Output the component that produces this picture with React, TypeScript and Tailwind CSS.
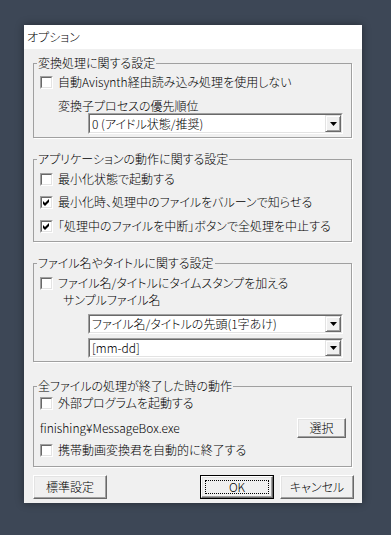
import React from 'react';

const font = "font-['Noto_Sans_CJK_JP','Liberation_Sans',sans-serif] font-light [font-feature-settings:'palt']";

function Check({ checked, label }: { checked?: boolean; label: string }) {
  return (
    <div className="flex items-center h-[16px] pl-[6px] gap-[5px]">
      <span className="w-[13px] h-[13px] shrink-0 border border-t-[#a0a0a0] border-l-[#a0a0a0] border-r-white border-b-white">
        <span className="block w-full h-full bg-white border border-t-[#696969] border-l-[#696969] border-r-[#e3e3e3] border-b-[#e3e3e3]">
          {checked && (
            <svg width="9" height="9" viewBox="0 0 9 9" className="block">
              <path d="M1 3 L3 5 L7 1 L7 4 L3 8 L1 6 Z" fill="#000" />
            </svg>
          )}
        </span>
      </span>
      <span className="text-[12px] leading-[16px] text-black whitespace-nowrap">{label}</span>
    </div>
  );
}

function Combo({ value, h }: { value: string; h: string }) {
  return (
    <div className={`flex ml-[54px] mr-[8px] ${h} bg-white border border-t-[#a0a0a0] border-l-[#a0a0a0] border-r-white border-b-white`}>
      <div className="flex flex-1 items-stretch border border-t-[#696969] border-l-[#696969] border-r-[#e3e3e3] border-b-[#e3e3e3]">
        <span className="flex-1 flex items-center pl-[2px] text-[12px] leading-[14px] text-black whitespace-nowrap">{value}</span>
        <span className="w-[16px] flex items-center justify-center bg-[#f0f0f0] border border-t-[#e3e3e3] border-l-[#e3e3e3] border-r-[#696969] border-b-[#696969] shadow-[inset_1px_1px_0_#fff,inset_-1px_-1px_0_#a0a0a0]">
          <svg width="7" height="4" viewBox="0 0 7 4" className="block">
            <path d="M0 0 H7 L3.5 4 Z" fill="#000" />
          </svg>
        </span>
      </div>
    </div>
  );
}

function Btn({ children, def, className }: { children: React.ReactNode; def?: boolean; className?: string }) {
  const inner = (
    <div className="w-full h-full flex items-center justify-center bg-[#f0f0f0] border border-t-white border-l-white border-r-[#696969] border-b-[#696969] shadow-[inset_-1px_-1px_0_#a0a0a0,inset_1px_1px_0_#e3e3e3]">
      {def ? (
        <span className="w-[calc(100%-6px)] h-[calc(100%-6px)] flex items-center justify-center border border-dotted border-black text-[12px] leading-[14px] text-black">
          {children}
        </span>
      ) : (
        <span className="text-[12px] leading-[14px] text-black">{children}</span>
      )}
    </div>
  );
  return def ? (
    <div className={`border border-black ${className}`}>{inner}</div>
  ) : (
    <div className={className}>{inner}</div>
  );
}

function Group({ title, className, children }: { title: string; className?: string; children: React.ReactNode }) {
  return (
    <fieldset className={`mr-[2px] border border-[#a0a0a0] shadow-[1px_1px_0_#fff] ${className}`}>
      <legend className="ml-[3px] px-[1px] text-[12px] leading-[14px] text-black">{title}</legend>
      {children}
    </fieldset>
  );
}

export default function App() {
  return (
    <div className={`w-[391px] h-[535px] bg-[#3d4756] pt-[25px] pl-[24px] ${font}`}>
      <div className="w-[338px] h-[478px] flex flex-col shadow-[0_0_8px_rgba(0,0,0,0.4)]">
        <div className="h-[24px] bg-white flex items-center pl-[3px] text-[12px] leading-[14px] text-black">オプション</div>

        <div className="flex-1 bg-[#f0f0f0] pt-[7px] pl-[9px] pr-[8px]">
          <Group title="変換処理に関する設定" className="pt-[4px] pb-[3px]">
            <Check label="自動Avisynth経由読み込み処理を使用しない" />
            <div className="mt-[9px] pl-[24px] text-[12px] leading-[14px] text-black">変換子プロセスの優先順位</div>
            <Combo value="0 (アイドル状態/推奨)" h="h-[21px]" />
          </Group>

          <Group title="アプリケーションの動作に関する設定" className="mt-[14px] pt-[5px] pb-[7px]">
            <Check label="最小化状態で起動する" />
            <div className="mt-[7px]">
              <Check checked label="最小化時、処理中のファイルをバルーンで知らせる" />
            </div>
            <div className="mt-[8px]">
              <Check checked label="「処理中のファイルを中断」ボタンで全処理を中止する" />
            </div>
          </Group>

          <Group title="ファイル名やタイトルに関する設定" className="mt-[14px] pt-[5px] pb-[3px]">
            <Check label="ファイル名/タイトルにタイムスタンプを加える" />
            <div className="mt-[2px] pl-[29px] text-[12px] leading-[14px] text-black">サンプルファイル名</div>
            <div className="mt-[7px]">
              <Combo value="ファイル名/タイトルの先頭(1字あけ)" h="h-[20px]" />
            </div>
            <div className="mt-[4px]">
              <Combo value="[mm-dd]" h="h-[20px]" />
            </div>
          </Group>

          <Group title="全ファイルの処理が終了した時の動作" className="mt-[17px] pt-[2px] pb-[8px]">
            <Check label="外部プログラムを起動する" />
            <div className="mt-[7px] h-[20px] flex items-center justify-between pl-[6px] pr-[5px]">
              <span className="text-[12px] leading-[14px] text-black">finishing¥MessageBox.exe</span>
              <Btn className="w-[49px] h-[20px]">選択</Btn>
            </div>
            <div className="mt-[4px]">
              <Check label="携帯動画変換君を自動的に終了する" />
            </div>
          </Group>

          <div className="mt-[8px] flex items-center">
            <Btn className="w-[74px] h-[24px]">標準設定</Btn>
            <div className="ml-auto flex gap-[6px]">
              <Btn def className="w-[74px] h-[24px]">OK</Btn>
              <Btn className="w-[74px] h-[24px]">キャンセル</Btn>
            </div>
          </div>
        </div>
      </div>
    </div>
  );
}
